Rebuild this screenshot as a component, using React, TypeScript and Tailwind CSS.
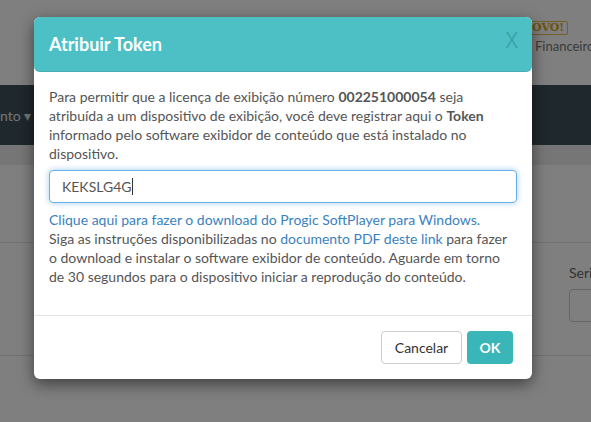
import React from "react";

export default function App() {
  const font = { fontFamily: "Lato, 'Noto Sans', sans-serif" };
  return (
    <div className="relative w-[591px] h-[422px] overflow-hidden bg-white" style={font}>
      {/* background page */}
      <div className="flex flex-col">
        <div className="h-[85px] bg-white flex justify-end">
          <div className="w-[56px] pt-[21px] flex flex-col items-start">
            <span className="ml-[-17px] px-[3px] border border-[#e8c04a] rounded-[2px] text-[11px] leading-[12px] font-bold text-[#d9a520]" style={{ fontFamily: "'DejaVu Serif', serif" }}>
              NOVO!
            </span>
            <span className="text-[13px] text-[#777] leading-[16px] mt-[3px] whitespace-nowrap">Financeiro</span>
          </div>
        </div>
        <div className="h-[60px] bg-[#3e505a] flex items-center">
          <span className="text-[14px] text-[#e4e8ea] whitespace-nowrap">nto ▾</span>
        </div>
        <div className="h-[20px] bg-[#ececec]" />
        <div className="h-[78px] bg-white border-b border-[#e4e4e4]" />
        <div className="h-[113px] bg-white border-b border-[#e4e4e4] flex justify-end">
          <div className="w-[22px] pt-[21px]">
            <div className="text-[14px] text-[#666] leading-[18px] whitespace-nowrap">Seri</div>
            <div className="mt-[7px] h-[33px] w-[30px] border border-[#ccc] rounded-[4px]" />
          </div>
        </div>
        <div className="flex-1 bg-white" />
      </div>

      {/* overlay */}
      <div className="absolute inset-0 bg-black/50" />

      {/* modal */}
      <div className="absolute left-[34px] top-[17px] w-[498px] bg-white rounded-[6px] shadow-[0_5px_15px_rgba(0,0,0,0.5)]">
        <div className="h-[55px] bg-[#4cc0c4] rounded-[6px] border-b border-[#44aeb2] flex items-center justify-between pl-[15px] pr-[14px]">
          <h2 className="text-[18px] font-bold text-white">Atribuir Token</h2>
          <span className="mt-[-7px] text-[21px] font-normal text-[#3aa3a7] leading-none" style={{ fontFamily: "'Open Sans', sans-serif" }}>X</span>
        </div>
        <div className="pl-[15px] pr-[15px] pt-[15px] pb-[29px] text-[14px] leading-[19px] text-[#555]">
          <p>
            Para permitir que a licença de exibição número <b>002251000054</b> seja
            <br />
            atribuída a um dispositivo de exibição, você deve registrar aqui o <b>Token</b>
            <br />
            informado pelo software exibidor de conteúdo que está instalado no
            <br />
            dispositivo.
          </p>
          <div className="mt-[7px] h-[33px] w-[468px] rounded-[4px] border border-[#66afe9] shadow-[0_0_6px_rgba(102,175,233,0.6)] flex items-center px-[12px] text-[14px] text-[#555]">
            KEKSLG4G<span className="inline-block w-px h-[17px] bg-[#333]" />
          </div>
          <p className="mt-[7px]">
            <span className="text-[#3a81c0]">Clique aqui para fazer o download do Progic SoftPlayer para Windows.</span>
            <br />
            Siga as instruções disponibilizadas no <span className="text-[#3a81c0]">documento PDF deste link</span> para fazer
            <br />
            o download e instalar o software exibidor de conteúdo. Aguarde em torno
            <br />
            de 30 segundos para o dispositivo iniciar a reprodução do conteúdo.
          </p>
        </div>
        <div className="border-t border-[#e5e5e5] pt-[15px] pb-[15px] pr-[19px] flex justify-end gap-[5px]">
          <button className="h-[33px] w-[81px] rounded-[4px] border border-[#ccc] bg-white text-[14px] text-[#333]">
            Cancelar
          </button>
          <button className="h-[33px] w-[46px] rounded-[4px] bg-[#3ab5b8] text-[14px] font-bold text-white">
            OK
          </button>
        </div>
      </div>
    </div>
  );
}
